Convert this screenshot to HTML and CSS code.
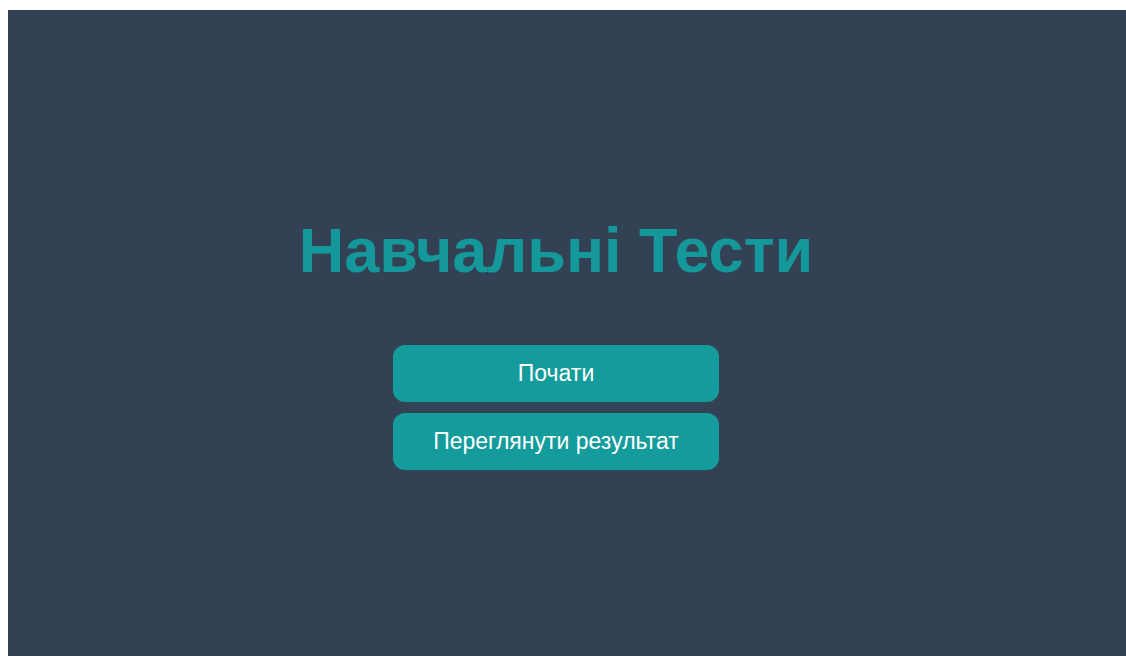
FILE: index.html
```html
<!DOCTYPE html>
<html lang="uk">
<head>
<meta charset="utf-8">
<title>Навчальні Тести</title>
<link rel="stylesheet" href="styles.css">
</head>
<body>
  <main class="app">
    <h1 class="app-title">Навчальні Тести</h1>
    <div class="menu">
      <button class="menu-btn" type="button">Почати</button>
      <button class="menu-btn" type="button">Переглянути результат</button>
    </div>
  </main>
</body>
</html>
```

FILE: styles.css
```css
html, body {
  margin: 0;
  padding: 0;
  background: #ffffff;
  overflow: hidden;
}

.app {
  margin: 10px 0 0 8px;
  height: calc(100vh - 10px);
  padding: 18px 22px 0 0;
  box-sizing: border-box;
  background: #334155;
  display: flex;
  flex-direction: column;
  align-items: center;
  justify-content: center;
  font-family: "Liberation Sans", Arial, sans-serif;
}

.app-title {
  margin: 0 0 58px;
  font-size: 63px;
  font-weight: 700;
  line-height: 1.15;
  color: #14989a;
}

.menu {
  display: flex;
  flex-direction: column;
  gap: 11px;
}

.menu-btn {
  width: 326px;
  height: 57px;
  border: none;
  border-radius: 12px;
  background: #149b9b;
  color: #ffffff;
  font-family: "Liberation Sans", Arial, sans-serif;
  font-size: 23px;
  cursor: pointer;
}
```
